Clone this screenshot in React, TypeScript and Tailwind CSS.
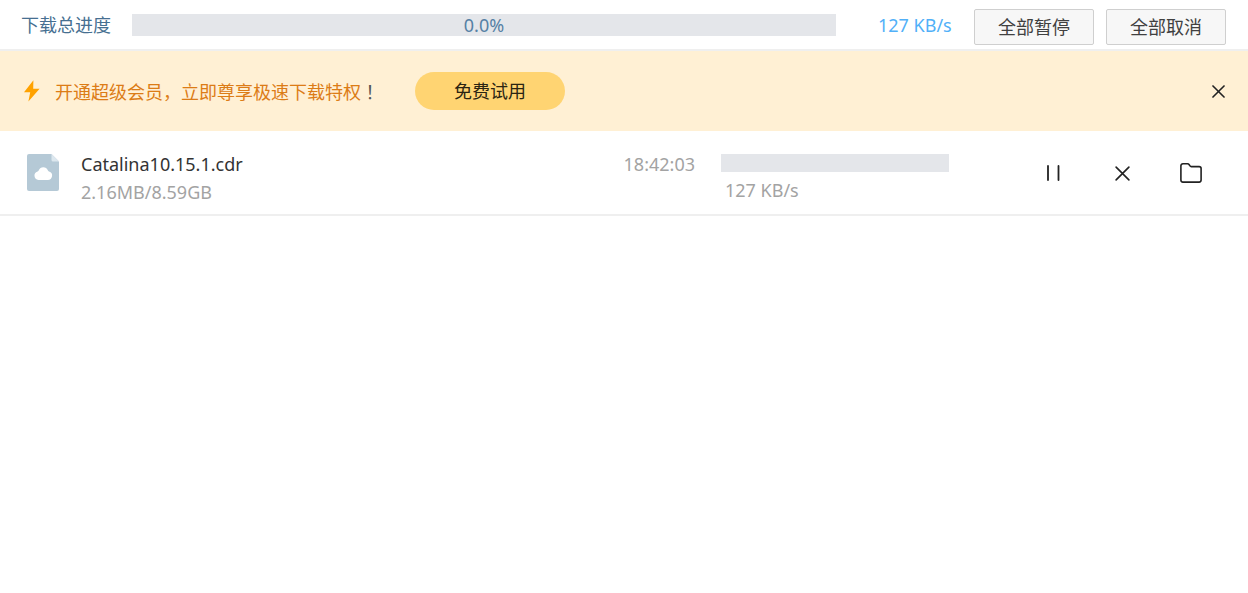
import type { ReactNode } from "react";

type Download = {
  name: string;
  size: string;
  remaining: string;
  speed: string;
  progress: number;
};

const downloads: Download[] = [
  {
    name: "Catalina10.15.1.cdr",
    size: "2.16MB/8.59GB",
    remaining: "18:42:03",
    speed: "127 KB/s",
    progress: 0,
  },
];

function ProgressBar({ value, label, className, children }: { value: number; label: string; className: string; children?: ReactNode }) {
  return (
    <div
      role="progressbar"
      aria-label={label}
      aria-valuenow={value}
      aria-valuemin={0}
      aria-valuemax={100}
      className={`relative flex items-center justify-center bg-[#e4e6ea] ${className}`}
    >
      <div className="absolute inset-y-0 left-0 bg-[#8ccbff]" style={{ width: `${value}%` }} />
      {children}
    </div>
  );
}

function ToolbarButton({ children }: { children: ReactNode }) {
  return (
    <button
      type="button"
      className="flex h-9 w-[120px] shrink-0 items-center justify-center rounded-xs border border-[#cfcfcf] bg-[#f7f7f7] text-[#404040]"
    >
      {children}
    </button>
  );
}

function IconButton({ label, children }: { label: string; children: ReactNode }) {
  return (
    <button type="button" aria-label={label} className="flex size-6 shrink-0 items-center justify-center text-[#222]">
      {children}
    </button>
  );
}

function BoltIcon() {
  return (
    <svg width="16" height="22" viewBox="0 0 16 22" fill="#ffa200" className="shrink-0" aria-hidden="true">
      <path d="M9.400.2 0 12.200h6.200L4.400 21.400 15.600 8.800H9.200Z" />
    </svg>
  );
}

function CloudFileIcon() {
  return (
    <svg width="32" height="37" viewBox="0 0 32 37" className="shrink-0" aria-hidden="true">
      <path d="M2 0h22.500L32 7.500V35a2 2 0 0 1-2 2H2a2 2 0 0 1-2-2V2a2 2 0 0 1 2-2Z" fill="#b5c9d6" />
      <path d="M24.500 0 32 7.500h-6a1.500 1.500 0 0 1-1.500-1.500Z" fill="#dce7ee" />
      <path d="M11.500 26a4.400 4.400 0 0 1-.9-8.600c.6-.2 1-.6 1.200-1.200a4.900 4.900 0 0 1 9 0c.2.600.6 1 1.200 1.200A4.400 4.400 0 0 1 20.500 26Z" fill="#fff" />
    </svg>
  );
}

function PauseIcon() {
  return (
    <svg width="14" height="16" viewBox="0 0 14 16" fill="none" stroke="currentColor" strokeWidth="1.800" strokeLinecap="round" aria-hidden="true">
      <path d="M2 1v14M12.500 1v14" />
    </svg>
  );
}

function CrossIcon({ className, strokeWidth }: { className: string; strokeWidth: number }) {
  return (
    <svg className={className} viewBox="0 0 16 16" fill="none" stroke="currentColor" strokeWidth={strokeWidth} strokeLinecap="round" aria-hidden="true">
      <path d="m1.200 1.200 13.600 13.600M14.800 1.200 1.200 14.800" />
    </svg>
  );
}

function FolderIcon() {
  return (
    <svg width="22" height="20" viewBox="0 0 22 20" fill="none" stroke="currentColor" strokeWidth="1.600" strokeLinejoin="round" aria-hidden="true">
      <path d="M.9 2.800a2 2 0 0 1 2-2h4.600c.8 0 1.300.3 1.700.9l.8 1.200c.3.500.700.700 1.300.700h7.800a2 2 0 0 1 2 2v11.500a2 2 0 0 1-2 2H2.900a2 2 0 0 1-2-2Z" />
    </svg>
  );
}

function DownloadRow({ item }: { item: Download }) {
  return (
    <li className="flex items-start border-b-2 border-[#efefef] pb-2 pl-[27px] pr-[45px] pt-[19px]">
      <div className="flex h-14 min-w-0 flex-1 items-start">
        <div className="pt-1">
          <CloudFileIcon />
        </div>
        <div className="ml-[22px] min-w-0 flex-1 leading-7">
          <p className="truncate text-[#333]">{item.name}</p>
          <p className="text-[#a3a3a3]">{item.size}</p>
        </div>
      </div>
      <time className="leading-7 text-[#a3a3a3]">{item.remaining}</time>
      <div className="ml-[26px] w-[228px] shrink-0 pt-1">
        <ProgressBar value={item.progress} label={item.name} className="h-[18px]" />
        <p className="mt-1 pl-1 leading-7 text-[#a3a3a3]">{item.speed}</p>
      </div>
      <div className="ml-[92px] flex gap-[45px] pt-[11px]">
        <IconButton label="暂停">
          <PauseIcon />
        </IconButton>
        <IconButton label="取消">
          <CrossIcon className="size-[15px]" strokeWidth={1.7} />
        </IconButton>
        <IconButton label="打开文件夹">
          <FolderIcon />
        </IconButton>
      </div>
    </li>
  );
}

export default function App() {
  return (
    <main
      lang="zh-CN"
      className="min-h-screen bg-white font-['Noto_Sans','Noto_Sans_CJK_SC',sans-serif] text-[18px] leading-7"
    >
      <header className="flex h-[51px] items-center border-b-2 border-[#efefef] pl-[21px] pr-[22px] pt-1">
        <span className="mb-1 shrink-0 text-[#466f91]">下载总进度</span>
        <ProgressBar value={0} label="下载总进度" className="mb-1 ml-[21px] h-[22px] flex-1 text-[#5681a5]">
          <span className="relative">0.0%</span>
        </ProgressBar>
        <span className="mb-1 ml-[42px] w-24 shrink-0 text-[#51b0f8]">127 KB/s</span>
        <div className="flex gap-3">
          <ToolbarButton>全部暂停</ToolbarButton>
          <ToolbarButton>全部取消</ToolbarButton>
        </div>
      </header>

      <section aria-label="会员特权" className="flex h-20 items-center bg-[#fff0d4] pl-6 pr-[18px]">
        <BoltIcon />
        <p className="ml-[15px] text-[#dc7c16]">
          开通超级会员，立即尊享极速下载特权
          <span lang="zh-TW" className="font-['Noto_Sans_CJK_TC',sans-serif] text-[#555]">！</span>
        </p>
        <button
          type="button"
          className="ml-9 flex h-[38px] w-[150px] shrink-0 items-center justify-center rounded-full bg-[#ffd472] text-[#2b2412]"
        >
          免费试用
        </button>
        <button type="button" aria-label="关闭" className="ml-auto flex size-6 items-center justify-center text-[#222]">
          <CrossIcon className="size-[13px]" strokeWidth={2} />
        </button>
      </section>

      <ul>
        {downloads.map((item) => (
          <DownloadRow key={item.name} item={item} />
        ))}
      </ul>
    </main>
  );
}
